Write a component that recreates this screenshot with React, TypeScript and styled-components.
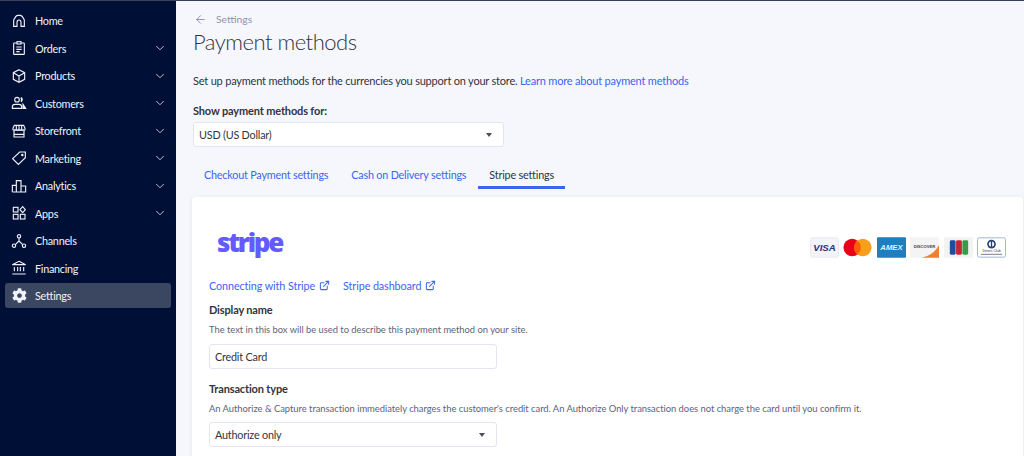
import React from 'react'
import styled, { createGlobalStyle } from 'styled-components'
import { ChevronDown, ArrowLeft, ExternalLink } from 'lucide-react'
import { FaCog } from 'react-icons/fa'

const FONT = `Lato, "Noto Sans", sans-serif`

const GlobalStyle = createGlobalStyle`
  html, body { margin: 0; height: 456px; overflow: hidden; background: #f6f7fc; }
  body { font-family: ${FONT}; }
  * { box-sizing: border-box; }
`

const icons: Record<string, React.ReactElement> = {
  Home: <><path d="M4 20V10.5L7 5.5Q8 4 10 3.5H14Q16 4 17 5.5L20 10.5V20H15V14Q15 10.5 12 10.5T9 14V20Z" /></>,
  Orders: <><rect x="4" y="4.5" width="16" height="17" rx="1" /><rect x="9" y="2.5" width="6" height="3.5" fill="#000f36" /><path d="M8 10.5H16M8 14H16M8 17.5H13" /></>,
  Products: <><path d="M12 2.5L20.5 7V17L12 21.5L3.5 17V7Z" /><path d="M3.5 7L12 12L20.5 7M12 12V21.5" /></>,
  Customers: <><circle cx="9" cy="7" r="3.5" /><path d="M2 20V17.5Q2 14 6 14H12Q16 14 16 17.5V20Z" /><path d="M15 4Q18 7 15 10" strokeWidth="2.4" /><path d="M18 14L22 20H18Z" fill="currentColor" /></>,
  Storefront: <><path d="M3 8L5 3.5H19L21 8V10Q19.5 12 18 10Q16.5 12 15 10Q13.5 12 12 10Q10.5 12 9 10Q7.5 12 6 10Q4.500 12 3 10Z" /><path d="M8 3.500V10M12 3.500V10M16 3.500V10" /><path d="M4.500 12V21H19.500V12M4.500 17H19.500" /></>,
  Marketing: <><path d="M2.500 13L13 3H21.500V11.500L11 21.500Z" /><circle cx="17" cy="7.500" r="1" /></>,
  Analytics: <><path d="M2 21V11H8V21M8 21V4H15V21M15 21V12H22V21ZM2 21H22" /></>,
  Apps: <><rect x="3.500" y="3.500" width="7" height="7" /><rect x="3.500" y="14" width="7" height="7" /><rect x="14" y="14" width="7" height="7" /><path d="M17.500 2.500L21.500 7L17.500 11.500L13.500 7Z" /></>,
  Channels: <><circle cx="12" cy="5" r="2.500" /><circle cx="4.500" cy="19" r="2.500" /><circle cx="19.500" cy="19" r="2.500" /><path d="M12 7.500V12L6.500 17.500M12 12L17.500 17.500" /></>,
  Financing: <><path d="M12 2L22 7H2Z" /><path d="M5 10.500V17M10 10.500V17M14 10.500V17M19 10.500V17M2 21H22" /></>,
}

type NavEntry = { label: string; expandable?: boolean; active?: boolean }

const nav: NavEntry[] = [
  { label: 'Home' },
  { label: 'Orders', expandable: true },
  { label: 'Products', expandable: true },
  { label: 'Customers', expandable: true },
  { label: 'Storefront', expandable: true },
  { label: 'Marketing', expandable: true },
  { label: 'Analytics', expandable: true },
  { label: 'Apps', expandable: true },
  { label: 'Channels' },
  { label: 'Financing' },
  { label: 'Settings', active: true },
]

const Page = styled.div`
  display: flex;
  width: 1024px;
  height: 456px;
  overflow: hidden;
  border-top: 1px solid #3a4058;
`
const Sidebar = styled.nav`
  flex: 0 0 176px;
  background: #000f36;
  padding: 7px 5px 0;
  display: flex;
  flex-direction: column;
  gap: 2.5px;
`
const NavRow = styled.div<{ $active?: boolean }>`
  height: 25px;
  display: flex;
  align-items: center;
  padding: 0 4px 0 6px;
  border-radius: 3px;
  color: #f0f2f8;
  font-size: 10.800px;
  letter-spacing: -0.25px;
  background: ${p => (p.$active ? '#3b4660' : 'transparent')};
`
const NavIcon = styled.svg`
  width: 16px;
  height: 16px;
  margin-right: 8px;
  fill: none;
  stroke: currentColor;
  stroke-width: 1.7;
  flex: none;
`
const GearIcon = styled(FaCog)`
  width: 15px;
  height: 15px;
  margin: 0 8px 0 1px;
  flex: none;
`
const NavLabel = styled.span`
  flex: 1;
`
const Main = styled.main`
  flex: 1;
  min-width: 0;
  padding: 10px 1px 0 16px;
`
const Crumb = styled.div`
  display: flex;
  align-items: center;
  gap: 9px;
  height: 16px;
  padding-left: 2px;
  color: #8c93ad;
  font-size: 10.300px;
`
const Title = styled.h1`
  margin: 0;
  height: 34px;
  padding-left: 1px;
  font-size: 22px;
  letter-spacing: -0.5px;
  line-height: 30px;
  font-weight: 300;
  color: #313440;
`
const Intro = styled.p`
  margin: 11px 0 0;
  height: 18px;
  padding-left: 1px;
  line-height: 18px;
  font-size: 11px;
  letter-spacing: -0.2px;
  color: #313440;
`
const Link = styled.a`
  color: #3c64f4;
  text-decoration: none;
`
const FieldLabel = styled.div`
  font-size: 11px;
  letter-spacing: -0.15px;
  font-weight: 700;
  color: #313440;
  line-height: 16px;
`
const PageLabel = styled(FieldLabel)`
  margin-top: 13px;
  padding-left: 1px;
`
const SelectBox = styled.div<{ $width: number }>`
  width: ${p => p.$width}px;
  height: 25px;
  display: flex;
  align-items: center;
  justify-content: space-between;
  padding: 0 11px 0 5px;
  background: #fff;
  border: 1px solid #e3e6f0;
  border-radius: 3px;
  font-size: 10.800px;
  letter-spacing: -0.2px;
  color: #313440;
`
const PageSelect = styled(SelectBox)`
  margin: 3px 0 0 1px;
`
const Caret = styled.span`
  width: 0;
  height: 0;
  border-left: 3.500px solid transparent;
  border-right: 3.500px solid transparent;
  border-top: 4px solid #4a4f60;
`
const Tabs = styled.div`
  display: flex;
  gap: 1px;
  margin-top: 16px;
  padding-left: 1px;
`
const Tab = styled.div<{ $active?: boolean }>`
  height: 26px;
  padding: 0 11px;
  line-height: 23px;
  font-size: 10.800px;
  letter-spacing: -0.2px;
  white-space: nowrap;
  color: ${p => (p.$active ? '#313440' : '#3c64f4')};
  border-bottom: 3px solid ${p => (p.$active ? '#3c64f4' : 'transparent')};
`
const Card = styled.section`
  margin-top: 8px;
  height: 300px;
  background: #fff;
  border-radius: 3px;
  box-shadow: 0 1px 4px rgba(49, 52, 64, 0.1);
  padding: 0 17px;
`
const CardTop = styled.div`
  display: flex;
  align-items: center;
  justify-content: space-between;
  height: 76px;
`
const StripeLogo = styled.div`
  margin: 14px 0 0 8px;
  font-family: "Open Sans", sans-serif;
  font-size: 26px;
  font-weight: 800;
  letter-spacing: -2.300px;
  color: #635bff;
`
const Cards = styled.div`
  display: flex;
  align-items: center;
  gap: 4.500px;
  margin-top: 24px;
`
const CardBadge = styled.svg`
  display: block;
  width: 29px;
  height: 21px;
`
const LinkRow = styled.div`
  display: flex;
  gap: 13px;
  height: 24px;
  align-items: center;
  font-size: 10.800px;
  letter-spacing: -0.1px;
`
const OutLink = styled(Link)`
  display: flex;
  align-items: center;
  gap: 4px;
`
const CardLabel = styled(FieldLabel)`
  margin-top: 5px;
`
const TypeLabel = styled(FieldLabel)`
  margin-top: 12px;
`
const Help = styled.div`
  margin-top: 5px;
  font-size: 9.400px;
  letter-spacing: -0.02px;
  line-height: 14px;
  color: #5e637a;
  white-space: nowrap;
`
const TextBox = styled(SelectBox)`
  margin-top: 7px;
`
const CardSelect = styled(SelectBox)`
  margin-top: 6px;
`

const badgeText = { fontFamily: '"Liberation Sans", sans-serif', fontWeight: 700, textAnchor: 'middle' } as const

function PaymentBadges() {
  return (
    <Cards>
      <CardBadge viewBox="0 0 30 21">
        <rect x=".5" y=".5" width="29" height="20" rx="2" fill="#f3f4fa" stroke="#e8eaf2" />
        <text x="15" y="14.500" fontSize="10" fontStyle="italic" fill="#26337a" style={badgeText}>VISA</text>
      </CardBadge>
      <CardBadge viewBox="0 0 30 21">
        <circle cx="9.500" cy="10.500" r="9" fill="#eb001b" />
        <circle cx="20.500" cy="10.500" r="9" fill="#f79e1b" />
        <path d="M15 3.400a9 9 0 0 1 0 14.200a9 9 0 0 1 0-14.200Z" fill="#ff5f00" />
      </CardBadge>
      <CardBadge viewBox="0 0 30 21">
        <rect width="30" height="21" rx="1" fill="#1f7ec2" />
        <text x="15" y="13.500" fontSize="8" fontStyle="italic" fill="#dff1fb" style={badgeText}>AMEX</text>
      </CardBadge>
      <CardBadge viewBox="0 0 30 21">
        <rect width="30" height="21" rx="1" fill="#f4f4f4" />
        <path d="M30 8V21H12Q24 19 30 8Z" fill="#f0802f" />
        <text x="15" y="11.500" fontSize="4.300" fill="#444" style={badgeText}>DISCOVER</text>
      </CardBadge>
      <CardBadge viewBox="0 0 30 21">
        <rect width="30" height="21" rx="1" fill="#f3f3f4" />
        <rect x="6" y="3" width="6" height="15" rx="1.500" fill="#1c4f9c" />
        <rect x="12.500" y="3" width="6" height="15" rx="1.500" fill="#c8252f" />
        <rect x="19" y="3" width="6" height="15" rx="1.500" fill="#3a9a4a" />
      </CardBadge>
      <CardBadge viewBox="0 0 30 21">
        <rect x=".5" y=".5" width="29" height="20" rx="2" fill="#fff" stroke="#9fb3d6" />
        <circle cx="15" cy="7" r="4.500" fill="#24427e" />
        <circle cx="15" cy="7" r="2.800" fill="#fff" />
        <rect x="14.300" y="3.500" width="1.400" height="7" fill="#24427e" />
        <text x="15" y="15.500" fontSize="3.600" fill="#334" style={{ ...badgeText, fontWeight: 400 }}>Diners Club</text>
        <rect x="4" y="17" width="22" height="1.200" fill="#8890a8" />
      </CardBadge>
    </Cards>
  )
}

export default function App() {
  return (
    <>
      <GlobalStyle />
      <Page>
        <Sidebar>
          {nav.map(item => (
            <NavRow key={item.label} $active={item.active}>
              {item.active ? <GearIcon /> : <NavIcon viewBox="0 0 24 24">{icons[item.label]}</NavIcon>}
              <NavLabel>{item.label}</NavLabel>
              {item.expandable && <ChevronDown size={14} strokeWidth={1.500} color="#d5d9e6" />}
            </NavRow>
          ))}
        </Sidebar>
        <Main>
          <Crumb>
            <ArrowLeft size={13} strokeWidth={1.800} />
            Settings
          </Crumb>
          <Title>Payment methods</Title>
          <Intro>
            Set up payment methods for the currencies you support on your store. <Link>Learn more about payment methods</Link>
          </Intro>
          <PageLabel>Show payment methods for:</PageLabel>
          <PageSelect $width={311}>
            USD (US Dollar)
            <Caret />
          </PageSelect>
          <Tabs>
            <Tab>Checkout Payment settings</Tab>
            <Tab>Cash on Delivery settings</Tab>
            <Tab $active>Stripe settings</Tab>
          </Tabs>
          <Card>
            <CardTop>
              <StripeLogo>stripe</StripeLogo>
              <PaymentBadges />
            </CardTop>
            <LinkRow>
              <OutLink>Connecting with Stripe <ExternalLink size={11} strokeWidth={2.200} /></OutLink>
              <OutLink>Stripe dashboard <ExternalLink size={11} strokeWidth={2.200} /></OutLink>
            </LinkRow>
            <CardLabel>Display name</CardLabel>
            <Help>The text in this box will be used to describe this payment method on your site.</Help>
            <TextBox $width={288}>Credit Card</TextBox>
            <TypeLabel>Transaction type</TypeLabel>
            <Help>An Authorize &amp; Capture transaction immediately charges the customer's credit card. An Authorize Only transaction does not charge the card until you confirm it.</Help>
            <CardSelect $width={288}>
              Authorize only
              <Caret />
            </CardSelect>
          </Card>
        </Main>
      </Page>
    </>
  )
}
